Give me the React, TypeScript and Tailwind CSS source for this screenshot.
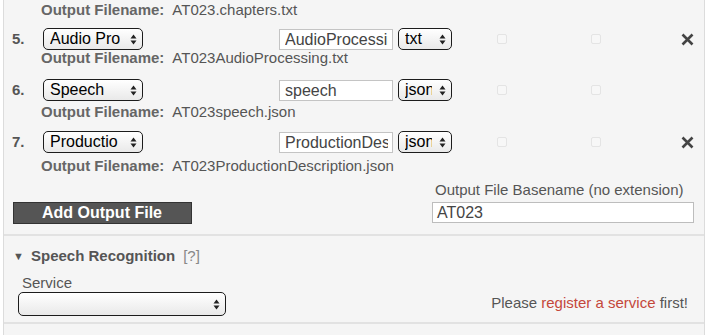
import React from "react";

const font = { fontFamily: '"Liberation Sans", Arial, sans-serif' };

const Arrows = () => (
  <svg width="7" height="11" viewBox="0 0 7 11" className="shrink-0">
    <path d="M0.5 4.5 L3.5 0.5 L6.5 4.5 Z M0.5 6.5 L3.5 10.5 L6.5 6.5 Z" fill="#222" />
  </svg>
);

interface SelectProps {
  label: string;
  className?: string;
  labelClass?: string;
}

const MacSelect = ({ label, className = "", labelClass = "" }: SelectProps) => (
  <div
    className={`flex items-center justify-between overflow-hidden rounded-[5px] border border-[#1c1c1c] bg-linear-to-b from-white to-[#e9e9e9] pl-[6px] pr-[5px] text-[16px] text-black ${className}`}
  >
    <span className={`overflow-hidden whitespace-nowrap leading-[18px] ${labelClass}`}>{label}</span>
    <Arrows />
  </div>
);

const Check = () => (
  <span className="block h-[10px] w-[10px] rounded-[2px] border border-[#e4e4e4] bg-[#f7f7f7]" />
);

const Remove = () => (
  <svg width="13" height="13" viewBox="0 0 13 13">
    <path d="M1.5 1.5 L11.5 11.5 M11.5 1.5 L1.5 11.5" stroke="#444" strokeWidth="2.6" />
  </svg>
);

interface OutputRow {
  n: number;
  type: string;
  name: string;
  ext: string;
  file: string;
  removable: boolean;
  rowGap: string;
  fileGap: string;
}

// spacing in the old form isn't uniform, so each row carries its own gaps
const rows: OutputRow[] = [
  { n: 5, type: "Audio Pro", name: "AudioProcessing", ext: "txt", file: "AT023AudioProcessing.txt", removable: true, rowGap: "mt-[11px]", fileGap: "mt-0" },
  { n: 6, type: "Speech", name: "speech", ext: "json", file: "AT023speech.json", removable: false, rowGap: "mt-[14px]", fileGap: "mt-[3px]" },
  { n: 7, type: "Productio", name: "ProductionDescription", ext: "json", file: "AT023ProductionDescription.json", removable: true, rowGap: "mt-[12px]", fileGap: "mt-[5px]" },
];

const Filename = ({ file, className = "" }: { file: string; className?: string }) => (
  <div className={`h-[15px] whitespace-nowrap pl-[37px] text-[15px] leading-[15px] ${className}`}>
    <span className="font-bold text-[#666]">Output Filename:</span>
    <span className="ml-[8px] text-[#555]">{file}</span>
  </div>
);

export default function App() {
  return (
    <div className="h-[335px] w-[710px] overflow-hidden bg-white" style={font}>
      <div className="ml-[3px] h-full w-[702px] border-x border-[#dcdcdc] bg-[#f5f5f5]">
        <div className="pt-[2px]">
          <Filename file="AT023.chapters.txt" />

          {rows.map((r) => (
            <div key={r.n} className={r.rowGap}>
              <div className="flex h-[22px] items-center">
                <span className="w-[39px] pl-[8px] text-[15px] font-bold text-[#555]">{r.n}.</span>
                <div className="w-[236px]">
                  <MacSelect label={r.type} className="h-[22px] w-[100px]" />
                </div>
                <div className="w-[119px]">
                  <div className="h-[21px] w-[114px] border border-[#c4c4c4] bg-white pl-[5px] text-[16px] leading-[19px] text-[#444]">
                    <div className="w-[103px] overflow-hidden whitespace-nowrap">{r.name}</div>
                  </div>
                </div>
                <MacSelect label={r.ext} className="h-[22px] w-[54px]" labelClass="w-[27px]" />
                <div className="ml-[45px]">
                  <Check />
                </div>
                <div className="ml-[84px]">
                  <Check />
                </div>
                {r.removable && (
                  <div className="ml-[80px]">
                    <Remove />
                  </div>
                )}
              </div>
              <Filename file={r.file} className={r.fileGap} />
            </div>
          ))}

          <div className="mt-[9px] flex items-end justify-between pb-[10px] pl-[9px] pr-[10px]">
            <button className="h-[22px] w-[179px] border border-[#333] bg-[#555] pl-[28px] text-left text-[16px] font-bold leading-[20px] text-white">
              Add Output File
            </button>
            <div className="w-[262px]">
              <div className="pl-[3px] text-[15px] leading-[16px] text-[#555]">Output File Basename (no extension)</div>
              <div className="mb-[1px] mt-[4px] h-[21px] border border-[#bdbdbd] bg-white pl-[4px] text-[16px] leading-[19px] text-[#444]">
                AT023
              </div>
            </div>
          </div>
        </div>

        <div className="border-t-2 border-[#e2e2e2] pb-[6px] pl-[9px] pr-[16px] pt-[11px]">
          <div className="flex items-center text-[15px] leading-[18px]">
            <span className="w-[10px] text-[11px] leading-[18px] text-[#555]">▼</span>
            <span className="ml-[8px] font-bold text-[#555]">Speech Recognition</span>
            <span className="ml-[8px] text-[#888]">[?]</span>
          </div>
          <div className="flex items-end justify-between">
            <div className="pl-[9px]">
              <div className="mt-[9px] text-[15px] leading-[17px] text-[#555]">Service</div>
              <MacSelect label="" className="-ml-[4px] mt-[1px] h-[24px] w-[208px]" />
            </div>
            <div className="pb-[5px] text-[15px] leading-[17px] text-[#555]">
              Please <span className="text-[#c4473b]">register a service</span> first!
            </div>
          </div>
        </div>
        <div className="border-t-2 border-[#e2e2e2]" />
      </div>
    </div>
  );
}
